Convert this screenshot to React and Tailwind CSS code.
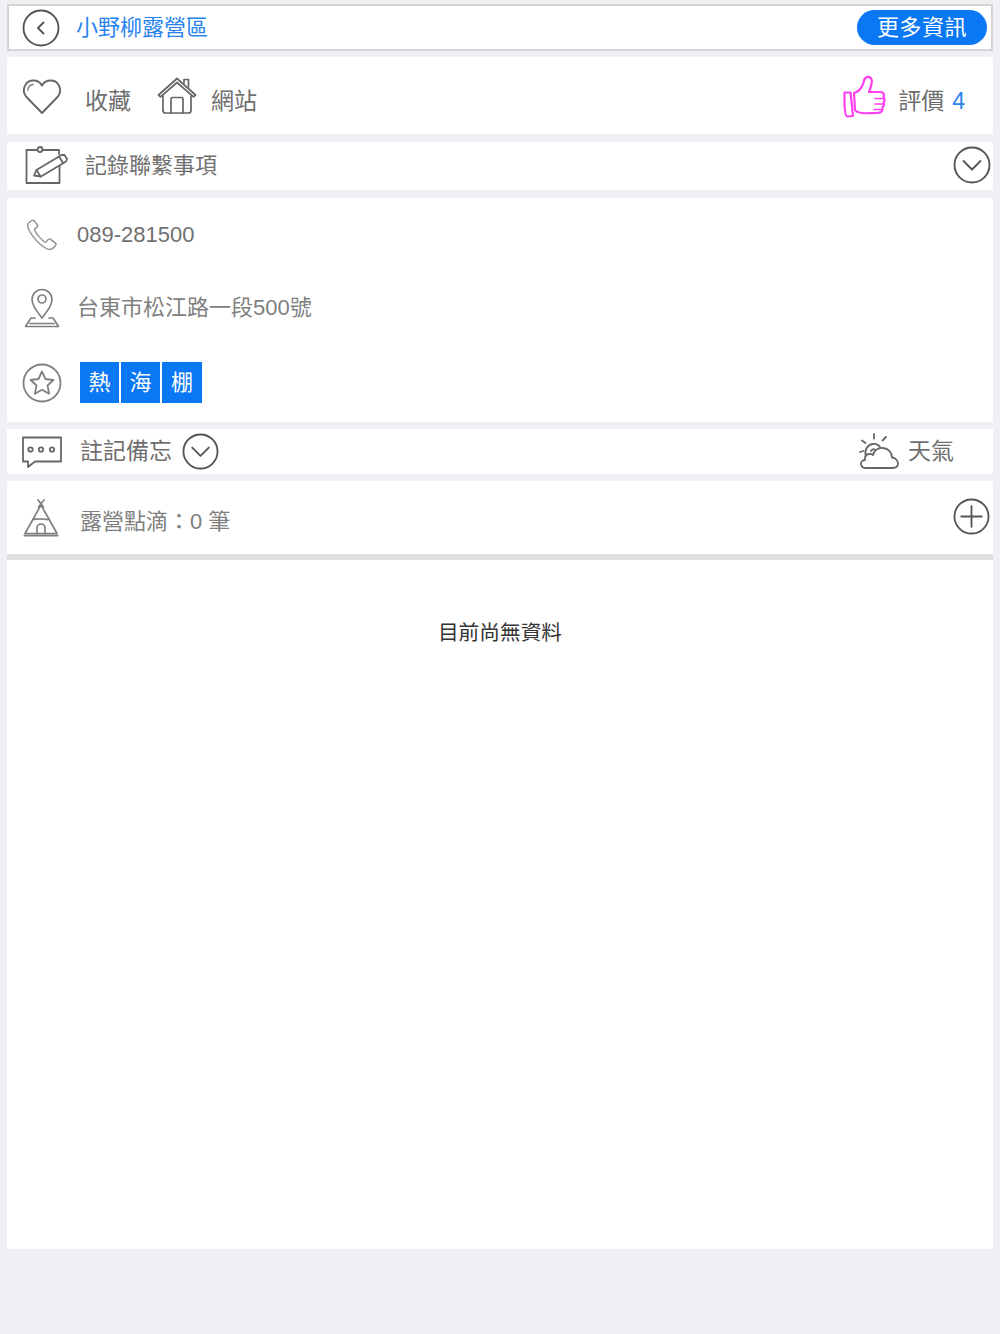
const font = { fontFamily: '"Liberation Sans", "Noto Sans CJK TC", sans-serif' };
const Chev = ({ dir = 'down', size = 38 }) => (
  <svg width={size} height={size} viewBox="0 0 38 38" fill="none" stroke="#555" strokeWidth="1.900" strokeLinecap="round" strokeLinejoin="round" className="shrink-0">
    <circle cx="19" cy="19" r="17.500" />
    {dir === 'down' && <path d="M10.500 15 19 23.500l8.500-8.500" />}
    {dir === 'left' && <path d="M21.500 13.500 16 19l5.500 5.500" />}
    {dir === 'plus' && <><path d="M19 8.500v21" /><path d="M8.500 19h21" /></>}
  </svg>
);
const S = { fill: 'none', stroke: '#666', strokeWidth: 1.7, strokeLinecap: 'round', strokeLinejoin: 'round' };
const Heart = () => (
  <svg width="40" height="38" viewBox="0 0 40 38" {...S} strokeWidth="1.900" className="shrink-0">
    <path d="M20 36 4 19.500C-.5 14 2.500 4 10.500 3.500 15 3.200 18.500 5.500 20 8.500 21.500 5.500 25 3.200 29.500 3.500 37.500 4 40.500 14 36 19.500Z" />
    <path d="M6 13c0-3 2-5 5-5.500" stroke="#999" />
  </svg>
);
const House = () => (
  <svg width="40" height="38" viewBox="0 0 40 38" {...S} className="shrink-0">
    <path d="M1.500 18 20 1.500 38.500 18l-2 1.800L20 5.500 3.500 19.800Z" />
    <path d="M6 19v14.500c0 1.500.8 2.500 2.500 2.500h23c1.700 0 2.500-1 2.500-2.500V19" />
    <path d="M14 36V22c0-1 .7-1.500 1.500-1.500h9c.8 0 1.500.5 1.500 1.500v14" />
    <path d="M27 6V2.500h4.500v7.500" />
  </svg>
);
const Thumb = () => (
  <svg width="44" height="44" viewBox="0 0 44 44" fill="none" stroke="#ff40f0" strokeWidth="2.200" strokeLinejoin="round" strokeLinecap="round" className="shrink-0">
    <path d="M1.500 17.500h6l2.500 23.500-6 .5C2.500 41.500 2 37 1.500 31Z" />
    <path d="M11 18c4-1 7.500-5 9-9 .7-2 1-5 3-6.500 2.500-1.500 5.500 0 5.800 3 .3 3.500-1.200 7-2.800 11.500h11.500c3.500 0 4 3.500 3 5.500 1.500 1.500 1.500 4 0 5 1 1.500.5 4-1 4.500.5 2-.5 5-2.500 5.500-3 .7-14 1-18 .5-3-.4-6-1.500-7-3Z" />
    <path d="M32 23.500h9M32 29h8.500M31 34.500h8" strokeWidth="1.600" />
  </svg>
);
const Note = () => (
  <svg width="44" height="38" viewBox="0 0 44 38" {...S} strokeWidth="1.800" className="shrink-0">
    <path d="M12 4H1.500v33h33V20" />
    <path d="M18 4h16v4" />
    <circle cx="15" cy="3.500" r="2.500" />
    <path d="M9 29.500 11.500 24 36.500 9l3 0 2.500 4-1 2.500-25 15Z" />
    <path d="M11.500 24l4 6.500M34 10.500l4 6.500" />
  </svg>
);
const Phone = () => (
  <svg width="32" height="32" viewBox="0 0 32 32" fill="none" stroke="#999" strokeWidth="1.600" strokeLinejoin="round" className="shrink-0">
    <path d="M5 2 2.500 4C1 5.500 1.500 8 3 11c2.500 5 6 9.500 11 14 3.500 3 7 5.500 9.500 5.500 2 0 4.500-2 6-4 .8-1 .5-2-.3-2.700l-4.500-3.300c-1-.7-2-.5-2.700.3l-1.800 2c-.5.500-1.200.5-1.800.1C15 20 10.500 15 8.800 11.500c-.3-.7-.2-1.300.4-1.800l1.800-1.500c.7-.7.8-1.500.3-2.500L8.500 2.200C7.700 1 6.200 1 5 2Z" />
  </svg>
);
const Pin = () => (
  <svg width="36" height="40" viewBox="0 0 36 40" fill="none" stroke="#808080" strokeWidth="1.700" strokeLinejoin="round" strokeLinecap="round" className="shrink-0">
    <path d="M18 30C12 22 8 17 8 11.500a10 10 0 0 1 20 0C28 17 24 22 18 30Z" />
    <circle cx="18" cy="11" r="4" />
    <path d="M11 30H7L1.500 38.500h33L29 30h-4M6 35.500h24" />
  </svg>
);
const Star = () => (
  <svg width="40" height="40" viewBox="0 0 40 40" fill="none" stroke="#808080" strokeWidth="1.800" strokeLinejoin="round" className="shrink-0">
    <circle cx="20" cy="20" r="18.500" />
    <path d="m20 8.500 3.500 7.500 8 1-6 5.500 1.600 8.200-7.100-4-7.100 4 1.600-8.200-6-5.500 8-1Z" />
  </svg>
);
const Bubble = () => (
  <svg width="40" height="32" viewBox="0 0 40 32" fill="none" stroke="#666" strokeWidth="1.800" strokeLinejoin="round" className="shrink-0">
    <path d="M1 1.500h38v24H13L6 31v-5.500H1Z" />
    <circle cx="8.500" cy="13.500" r="2.200" /><circle cx="19" cy="13.500" r="2.200" /><circle cx="30" cy="13.500" r="2.200" />
  </svg>
);
const Tent = () => (
  <svg width="36" height="38" viewBox="0 0 36 38" fill="none" stroke="#808080" strokeWidth="1.700" strokeLinejoin="round" strokeLinecap="round" className="shrink-0">
    <path d="M15 1l5.500 7M21 1l-5.500 7" />
    <path d="M18 6 2 34.500h32Z" />
    <path d="M10 20c1.500 1.500 2.500-1 4 0s2.500-1 4 0 2.500-1 4 0 2.500 1 4 0" />
    <path d="M14 34.500V29a4 4 0 0 1 8 0v5.500" />
    <path d="M1.500 36.500h33" strokeWidth="2" />
  </svg>
);
const Weather = () => (
  <svg width="42" height="38" viewBox="0 0 42 38" fill="none" stroke="#666" strokeWidth="1.800" strokeLinecap="round" strokeLinejoin="round" className="shrink-0">
    <path d="M7 35c-3 0-5-1.500-5-4s2-4 4-4c-.5-3 1-5.500 4-6 1.500-.2 3 0 4 1 1-4.500 5-7.500 10-7 5.500.5 9 4.500 9 9.500 3.500.5 6 3 6 6 0 3-2.500 4.500-5.500 4.500Z" />
    <path d="M7 23c-2-5 1-11 6.500-12 3-.5 6 .5 7.500 3M12 18c1-1.500 2.500-2 4-1.500" />
    <path d="M15 1v4.500M3 7.500 6.500 10M27 4l-3.500 3.500M1 19l3.500-1" />
  </svg>
);

export default function App() {
  return (
    <div className="w-full min-h-[1334px] bg-[#efeff4] pt-1 px-[7px] flex flex-col" style={font}>
      <div className="h-[47px] bg-white border-2 border-[#d4d4d4] flex items-center pl-[13px] pr-[4px]">
        <Chev dir="left" />
        <span className="ml-[16px] text-[22px] text-[#2a84f0] leading-none">小野柳露營區</span>
        <span className="ml-auto w-[130px] h-[35px] bg-[#0a78f5] rounded-full flex items-center justify-center text-white text-[22px] tracking-[0.5px] leading-none">更多資訊</span>
      </div>

      <div className="mt-[6px] h-[77px] bg-white flex items-center pl-[15px] pr-[28px]">
        <Heart />
        <span className="ml-[23px] mt-[11px] text-[23px] text-[#6e6e6e] leading-none">收藏</span>
        <div className="ml-[26px] mt-[1px]"><House /></div>
        <span className="ml-[14px] mt-[11px] text-[23px] text-[#6e6e6e] leading-none">網站</span>
        <div className="ml-auto mt-[2px]"><Thumb /></div>
        <span className="ml-[11px] mt-[11px] text-[23px] text-[#6e6e6e] leading-none">評價</span>
        <span className="ml-[8px] mt-[11px] text-[23px] text-[#2a84f0] leading-none">4</span>
      </div>

      <div className="mt-2 h-[48px] bg-white flex items-center pl-[18px] pr-[2px]">
        <div className="-mt-[3px]"><Note /></div>
        <span className="ml-[16px] text-[22px] text-[#707070] leading-none">記錄聯繫事項</span>
        <div className="ml-auto -mt-[3px]"><Chev /></div>
      </div>

      <div className="mt-2 h-[224px] bg-white flex flex-col pl-[15px]">
        <div className="h-[74px] flex items-center">
          <div className="ml-[4px] w-[35px]"><Phone /></div>
          <span className="ml-[16px] text-[22px] text-[#707070] leading-none">089-281500</span>
        </div>
        <div className="h-[72px] flex items-center">
          <div className="ml-[2px]"><Pin /></div>
          <span className="ml-[17px] text-[22px] text-[#808080] leading-none">台東市松江路一段500號</span>
        </div>
        <div className="h-[78px] flex items-center">
          <Star />
          <div className="ml-[18px] flex gap-[2px] -mt-[1px]">
            <span className="w-[39px] h-[41px] bg-[#0a78f5] flex items-center justify-center text-white text-[22px] leading-none">熱</span>
            <span className="w-[39px] h-[41px] bg-[#0a78f5] flex items-center justify-center text-white text-[22px] leading-none">海</span>
            <span className="w-[40px] h-[41px] bg-[#0a78f5] flex items-center justify-center text-white text-[22px] leading-none">棚</span>
          </div>
        </div>
      </div>

      <div className="mt-[7px] h-[45px] bg-white flex items-center pl-[15px]">
        <Bubble />
        <span className="ml-[18px] text-[23px] text-[#707070] leading-none">註記備忘</span>
        <div className="ml-[10px]"><Chev size={37} /></div>
        <div className="ml-auto"><Weather /></div>
        <span className="ml-[7px] mr-[39px] text-[23px] text-[#707070] leading-none">天氣</span>
      </div>

      <div className="mt-[7px] h-[73px] bg-white flex items-center pl-[16px] pr-[3px]">
        <Tent />
        <span className="ml-[21px] mt-[9px] text-[22px] text-[#808080] leading-none">露營點滴：0 筆</span>
        <div className="ml-auto -mt-[2px]"><Chev dir="plus" size={37} /></div>
      </div>
      <div className="h-[6px] bg-[#e0e0e0]" />

      <div className="h-[689px] bg-white flex justify-center pt-[63px]">
        <span className="text-[20.700px] text-[#333] leading-none h-6">目前尚無資料</span>
      </div>
    </div>
  );
}
